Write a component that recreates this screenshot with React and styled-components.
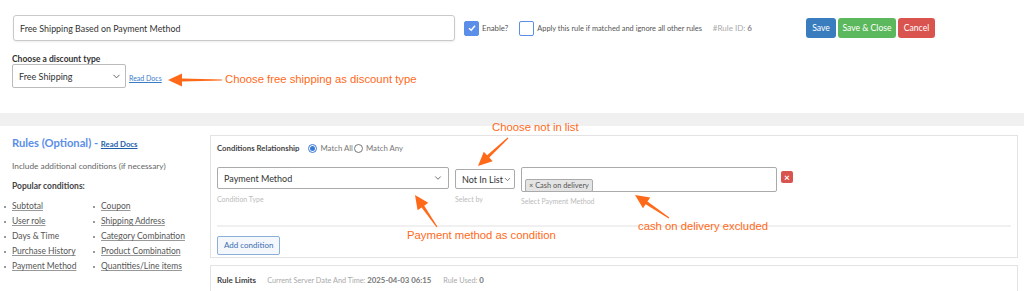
import React from "react";
import styled, {createGlobalStyle} from "styled-components";
import {ChevronDown} from "lucide-react";

const GlobalStyle = createGlobalStyle`
  body {
    margin: 0;
    background: #fff;
    font-family: "Lato", "Noto Sans", sans-serif;
    color: #444;
  }
`;

const Page = styled.div`
  position: relative;
  width: 1024px;
  height: 291px;
  overflow: hidden;
  white-space: nowrap;
`;

const Top = styled.section`
  height: 113px;
  box-sizing: border-box;
  padding: 15px 89px 0 13px;
`;

const HeaderRow = styled.div`
  display: flex;
  align-items: center;
  height: 26px;
`;

const TitleInput = styled.div`
  width: 442px;
  height: 26px;
  box-sizing: border-box;
  border: 1px solid #c9c9c9;
  border-radius: 3px;
  box-shadow: 0 1px 2px rgba(0, 0, 0, 0.08);
  display: flex;
  align-items: center;
  padding-left: 6px;
  font-size: 8.9px;
  color: #333;
`;

const Check = styled.span`
  width: 15px;
  height: 15px;
  box-sizing: border-box;
  border-radius: 2px;
  border: 1.5px solid #5b8ee8;
  background: ${p => (p.$on ? "#5b8ee8" : "#fff")};
  display: inline-flex;
  align-items: center;
  justify-content: center;
  margin-left: ${p => p.$gap}px;
  flex-shrink: 0;
`;

const CheckText = styled.span`
  font-size: ${p => p.$fs || 7.8}px;
  color: #555;
  margin-left: 3px;
`;

const RuleId = styled.span`
  font-size: 8px;
  color: #aaa;
  margin-left: 11px;
  b {
    color: #888;
    font-weight: 700;
  }
`;

const Spacer = styled.div`
  flex: 1;
`;

const Btn = styled.button`
  width: ${p => p.$w}px;
  height: 20px;
  border: none;
  border-radius: 3px;
  padding: 0;
  margin-left: 2px;
  margin-top: -1px;
  background: ${p => p.$bg};
  color: #fff;
  font-family: inherit;
  font-size: 8.6px;
  cursor: pointer;
`;

const Label = styled.div`
  font-size: 8.5px;
  line-height: 9px;
  font-weight: 700;
  color: #333;
  margin: 14px 0 0 -1px;
`;

const TypeRow = styled.div`
  display: flex;
  align-items: center;
  margin-left: -1px;
`;

const Select = styled.div`
  width: ${p => p.$w}px;
  height: ${p => p.$h || 24}px;
  box-sizing: border-box;
  border: 1px solid ${p => p.$border || "#bbb"};
  border-radius: 2px;
  display: flex;
  align-items: center;
  justify-content: space-between;
  padding: 0 ${p => p.$pr || 5}px 0 6px;
  font-size: ${p => p.$fs || 9}px;
  color: #333;
  background: #fff;
  svg {
    color: #555;
    flex-shrink: 0;
  }
`;

const DocLink = styled.a`
  font-size: 7px;
  color: #3a7bc8;
  text-decoration: underline;
  margin: 4px 0 0 3px;
`;

const Band = styled.div`
  height: 13px;
  background: #f0f0f0;
`;

const Bottom = styled.section`
  display: flex;
`;

const Side = styled.aside`
  width: 210px;
  flex-shrink: 0;
  box-sizing: border-box;
  padding: 10px 0 0 12px;
`;

const SideTitle = styled.h3`
  margin: 0;
  font-size: 11.2px;
  font-weight: 700;
  color: #5b8ee8;
  a {
    font-size: 7.8px;
    color: #1f5fa8;
    text-decoration: underline;
  }
`;

const SideText = styled.p`
  margin: 12px 0 0;
  font-size: 8.3px;
  color: #666;
`;

const SideHead = styled.div`
  margin-top: 10px;
  font-size: 8.5px;
  font-weight: 700;
  color: #444;
`;

const Lists = styled.div`
  display: grid;
  grid-template-columns: 89px 1fr;
  margin: 8px 0 0 -9px;
`;

const List = styled.ul`
  margin: 0;
  padding: 0;
  list-style: none;
`;

const Item = styled.li`
  position: relative;
  height: 15px;
  line-height: 15px;
  padding-left: 9px;
  font-size: 8.5px;
  color: #555;
  text-decoration: ${p => (p.$plain ? "none" : "underline")};
  text-decoration-color: #999;
  &::before {
    content: "";
    position: absolute;
    left: 1px;
    top: 7px;
    width: 2px;
    height: 2px;
    background: #777;
    border-radius: 1px;
  }
`;

const Main = styled.div`
  flex: 1;
  margin-right: 6px;
`;

const Card = styled.div`
  border: 1px solid #e3e3e3;
  box-sizing: border-box;
  height: ${p => p.$h}px;
  margin-top: ${p => p.$mt}px;
  padding: ${p => p.$pad};
`;

const RelRow = styled.div`
  display: flex;
  align-items: center;
  height: 12px;
  font-size: 7.8px;
  color: #777;
`;

const Bold = styled.span`
  font-weight: 700;
  color: #444;
  font-size: ${p => p.$fs || 7.8}px;
  margin-right: ${p => p.$mr || 0}px;
`;

const Radio = styled.span`
  width: 9px;
  height: 9px;
  box-sizing: border-box;
  border-radius: 50%;
  border: 1px solid ${p => (p.$on ? "#3a7bd5" : "#777")};
  display: inline-flex;
  align-items: center;
  justify-content: center;
  margin: 0 3px 0 ${p => p.$ml || 0}px;
  &::after {
    content: "";
    width: 5px;
    height: 5px;
    border-radius: 50%;
    background: ${p => (p.$on ? "#3a7bd5" : "transparent")};
  }
`;

const CondRow = styled.div`
  display: flex;
  margin-top: 13px;
  height: 50px;
`;

const Field = styled.div`
  display: flex;
  flex-direction: column;
  margin-right: 6px;
  padding-top: ${p => p.$pt || 0}px;
`;

const Hint = styled.span`
  font-size: 7px;
  color: #bbb;
  margin-top: ${p => p.$mt}px;
`;

const Multi = styled.div`
  width: 256px;
  height: 25px;
  box-sizing: border-box;
  border: 1px solid #aaa;
  border-radius: 2px;
  padding: 4px 0 0 3px;
`;

const Tag = styled.span`
  display: inline-block;
  height: 11px;
  line-height: 11px;
  padding: 0 3px;
  border: 1px solid #aaa;
  border-radius: 2px;
  background: #e4e4e4;
  font-size: 7.4px;
  color: #555;
`;

const Remove = styled.span`
  width: 12px;
  height: 12px;
  border-radius: 2px;
  background: #d9534f;
  color: #fff;
  font-size: 10px;
  font-weight: 700;
  display: flex;
  align-items: center;
  justify-content: center;
  margin-top: 4px;
  margin-left: -2px;
  line-height: 1;
`;

const Divider = styled.hr`
  border: none;
  border-top: 2px solid #f0f0f0;
  margin: 8px 0 5px;
`;

const AddBtn = styled.button`
  height: 19px;
  padding: 0 6px;
  border: 1px solid #8ab0d8;
  border-radius: 2px;
  background: #f4f7fb;
  color: #3a6fb0;
  font-family: inherit;
  font-size: 8px;
`;

const LimitRow = styled.div`
  display: flex;
  align-items: baseline;
  font-size: 7.3px;
  color: #aaa;
  b {
    color: #777;
    font-weight: 700;
    font-size: 7.8px;
  }
`;

const Note = styled.span`
  position: absolute;
  left: ${p => p.$x}px;
  top: ${p => p.$y}px;
  font-family: "Liberation Sans", Arial, sans-serif;
  font-size: 11.3px;
  color: #ff6a1a;
  line-height: 1;
`;

const Overlay = styled.svg`
  position: absolute;
  left: 0;
  top: 0;
  pointer-events: none;
`;

const Arrow = ({x1, y1, x2, y2}) => {
  // tail (x1,y1) -> tip (x2,y2)
  const dx = x2 - x1;
  const dy = y2 - y1;
  const len = Math.hypot(dx, dy);
  const ux = dx / len;
  const uy = dy / len;
  const nx = -uy;
  const ny = ux;
  const head = 14;
  const bx = x2 - ux * head;
  const by = y2 - uy * head;
  const pts = [
    [x1 + nx * 0.6, y1 + ny * 0.6],
    [bx + nx * 1.6, by + ny * 1.6],
    [bx + nx * 6.5, by + ny * 6.5],
    [x2, y2],
    [bx - nx * 6.5, by - ny * 6.5],
    [bx - nx * 1.6, by - ny * 1.6],
    [x1 - nx * 0.6, y1 - ny * 0.6],
  ];
  const inner = [bx + ux * 3, by + uy * 3];
  return (
    <path
      d={`M${pts[0].join(",")} L${pts[1].join(",")} L${pts[2].join(",")} L${pts[3].join(",")} L${pts[4].join(",")} L${pts[5].join(",")} L${pts[6].join(",")} Z M${pts[2].join(",")} Q${inner.join(",")} ${pts[4].join(",")}`}
      fill="#ff6a1a"
    />
  );
};

const Tick = () => (
  <svg width="10" height="10" viewBox="0 0 10 10">
    <path d="M2 5.2 L4.2 7.2 L8 2.8" stroke="#fff" strokeWidth="1.5" fill="none"/>
  </svg>
);

const leftConds = [
  {t: "Subtotal"},
  {t: "User role"},
  {t: "Days & Time", plain: true},
  {t: "Purchase History"},
  {t: "Payment Method"},
];
const rightConds = ["Coupon", "Shipping Address", "Category Combination", "Product Combination", "Quantities/Line items"];

export default function App() {
  return (
    <Page>
      <GlobalStyle/>
      <Top>
        <HeaderRow>
          <TitleInput>Free Shipping Based on Payment Method</TitleInput>
          <Check $on $gap={9}><Tick/></Check>
          <CheckText>Enable?</CheckText>
          <Check $gap={11}/>
          <CheckText $fs={7.4}>Apply this rule if matched and ignore all other rules</CheckText>
          <RuleId>#Rule ID: <b>6</b></RuleId>
          <Spacer/>
          <Btn $bg="#3a7dbf" $w={30}>Save</Btn>
          <Btn $bg="#5cb85c" $w={58}>Save &amp; Close</Btn>
          <Btn $bg="#d9534f" $w={37}>Cancel</Btn>
        </HeaderRow>
        <Label>Choose a discount type</Label>
        <TypeRow>
          <Select $w={114} $h={24} $pr={3}>
            Free Shipping
            <ChevronDown size={11} strokeWidth={2}/>
          </Select>
          <DocLink>Read Docs</DocLink>
        </TypeRow>
      </Top>
      <Band/>
      <Bottom>
        <Side>
          <SideTitle>Rules (Optional) - <a>Read Docs</a></SideTitle>
          <SideText>Include additional conditions (if necessary)</SideText>
          <SideHead>Popular conditions:</SideHead>
          <Lists>
            <List>
              {leftConds.map(c => <Item key={c.t} $plain={c.plain}>{c.t}</Item>)}
            </List>
            <List>
              {rightConds.map(t => <Item key={t}>{t}</Item>)}
            </List>
          </Lists>
        </Side>
        <Main>
          <Card $h={123} $mt={9} $pad="6px 6px 0 6px">
            <RelRow>
              <Bold $mr={9}>Conditions Relationship</Bold>
              <Radio $on/>Match All
              <Radio $ml={1}/>Match Any
            </RelRow>
            <CondRow>
              <Field>
                <Select $w={232} $h={22} $border="#aaa">
                  Payment Method
                  <ChevronDown size={10} strokeWidth={2}/>
                </Select>
                <Hint $mt={6}>Condition Type</Hint>
              </Field>
              <Field $pt={2}>
                <Select $w={60} $h={20} $border="#aaa" $pr={4}>
                  Not In List
                  <ChevronDown size={9} strokeWidth={2}/>
                </Select>
                <Hint $mt={6}>Select by</Hint>
              </Field>
              <Field>
                <Multi><Tag>× Cash on delivery</Tag></Multi>
                <Hint $mt={5}>Select Payment Method</Hint>
              </Field>
              <Remove>×</Remove>
            </CondRow>
            <Divider/>
            <AddBtn>Add condition</AddBtn>
          </Card>
          <Card $h={40} $mt={7} $pad="9px 6px 0 6px">
            <LimitRow>
              <Bold $fs={8} $mr={11}>Rule Limits</Bold>
              Current Server Date And Time:&nbsp;<b>2025-04-03 06:15</b>
              <span style={{marginLeft: 12}}>Rule Used:&nbsp;<b>0</b></span>
            </LimitRow>
          </Card>
        </Main>
      </Bottom>

      <Overlay width="1024" height="291">
        <Arrow x1={222} y1={80} x2={168} y2={80}/>
        <Arrow x1={508} y1={138} x2={478} y2={166}/>
        <Arrow x1={437} y1={227} x2={415} y2={195}/>
        <Arrow x1={669} y1={218} x2={635} y2={195}/>
      </Overlay>
      <Note $x={225} $y={74}>Choose free shipping as discount type</Note>
      <Note $x={492} $y={122}>Choose not in list</Note>
      <Note $x={407} $y={230}>Payment method as condition</Note>
      <Note $x={638} $y={221}>cash on delivery excluded</Note>
    </Page>
  );
}
